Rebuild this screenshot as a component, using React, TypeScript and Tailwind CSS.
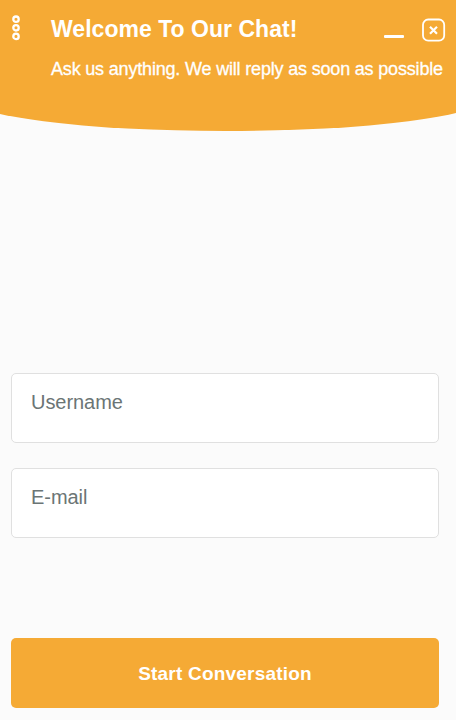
import React from 'react';

function MenuIcon() {
  return (
    <svg width="10" height="28" viewBox="0 0 10 28" fill="none" stroke="white" strokeWidth="2.3">
      <circle cx="5" cy="5.2" r="2.7" />
      <circle cx="5" cy="13.8" r="2.7" />
      <circle cx="5" cy="22.4" r="2.7" />
    </svg>
  );
}

function CloseIcon() {
  return (
    <svg width="24" height="24" viewBox="0 0 24 24" fill="none" stroke="white">
      <rect x="1" y="1.5" width="21.2" height="21.2" rx="5.2" strokeWidth="1.8" />
      <path d="M8 8.7l7 7M15 8.7l-7 7" strokeWidth="2.2" />
    </svg>
  );
}

function Field({ label }: { label: string }) {
  return (
    <input
      aria-label={label}
      placeholder={label}
      className="block h-[70px] w-full rounded-[5px] border border-[#e0e0e0] bg-white pt-0 pr-5 pb-[11px] pl-[19px] text-[20px] tracking-[-0.05px] text-[#6b7575] outline-none placeholder:text-[#6b7575]"
    />
  );
}

export default function App() {
  return (
    <div className="flex h-[720px] w-[456px] flex-col overflow-hidden bg-[#fbfbfb] font-['Liberation_Sans',Arial,sans-serif]">
      <header className="h-[131px] shrink-0 overflow-hidden">
        <div className="-mr-[28px] -ml-[32px] h-[131px] rounded-b-[50%_33px] bg-[#f5aa35] pl-[32px]">
          <div className="flex w-[456px] text-white">
            <button aria-label="Menu" className="mt-[14px] ml-[11px] h-7 w-[10px] shrink-0">
              <MenuIcon />
            </button>
            <div className="ml-[30px] flex-1">
              <div className="flex h-[57px] justify-between">
                <h1 className="mt-[14px] text-[23px] leading-[30px] font-bold tracking-[0.03px] whitespace-nowrap">
                  Welcome To Our Chat!
                </h1>
                <div className="flex pr-[10px]">
                  <button aria-label="Minimize" className="mt-[35px] mr-[18px] h-[3px] w-5 rounded-[1px] bg-white" />
                  <button aria-label="Close" className="mt-[18px] h-6 w-6">
                    <CloseIcon />
                  </button>
                </div>
              </div>
              <p className="text-[18px] leading-[24px] tracking-[-0.18px] whitespace-nowrap [-webkit-text-stroke:0.3px_white]">
                Ask us anything. We will reply as soon as possible
              </p>
            </div>
          </div>
        </div>
      </header>
      <form className="mt-[242px] flex w-[439px] flex-col pl-[11px]">
        <div className="flex flex-col gap-[25px]">
          <Field label="Username" />
          <Field label="E-mail" />
        </div>
        <button
          type="button"
          className="mt-[100px] h-[70px] rounded-[5px] bg-[#f5aa35] pt-[2px] text-[19px] font-bold tracking-[0.2px] text-white"
        >
          Start Conversation
        </button>
      </form>
    </div>
  );
}
